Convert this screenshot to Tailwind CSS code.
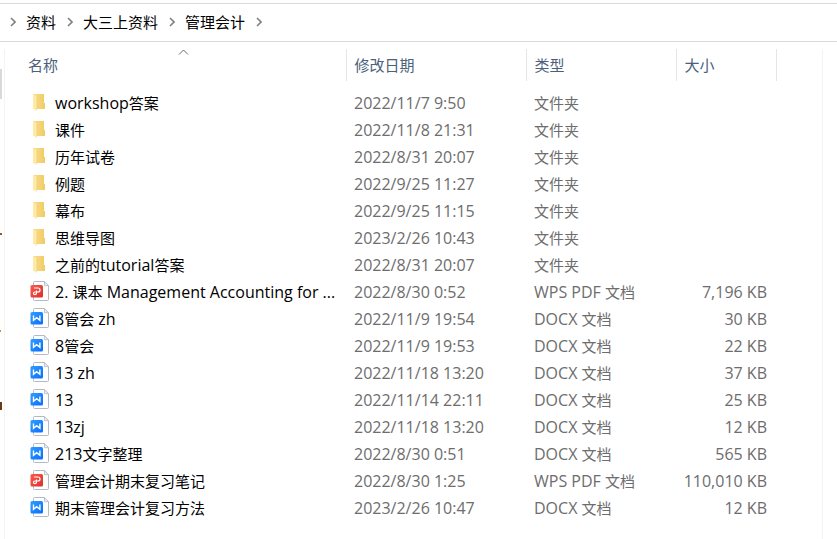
<!DOCTYPE html>
<html lang="zh-CN">
<head>
  <meta charset="UTF-8">
  <meta name="viewport" content="width=device-width, initial-scale=1.0">
  <title>管理会计</title>
  <script src="https://cdn.jsdelivr.net/npm/@tailwindcss/browser@4"></script>
</head>
<body class="bg-white text-[15px] leading-5 font-['Open_Sans','Noto_Sans_CJK_SC',sans-serif] text-black">
  <!-- icon definitions -->
  <svg class="absolute w-0 h-0" aria-hidden="true" xmlns="http://www.w3.org/2000/svg">
    <defs>
      <linearGradient id="folderBack" x1="0" x2="1" y1="0" y2="0">
        <stop offset="0" stop-color="#f8df90" />
        <stop offset="1" stop-color="#f0cb62" />
      </linearGradient>
      <linearGradient id="blue" x1="0" x2="1" y1="0" y2="1">
        <stop offset="0" stop-color="#2ea0ff" />
        <stop offset="1" stop-color="#0a6cff" />
      </linearGradient>
      <linearGradient id="red" x1="0" x2="1" y1="0" y2="1">
        <stop offset="0" stop-color="#ff5a4a" />
        <stop offset="1" stop-color="#d92f2f" />
      </linearGradient>
    </defs>
    <symbol id="icon-folder" viewBox="0 0 20 20">
      <path d="M3 2h11v9h1v6H3z" fill="url(#folderBack)" />
      <path d="M3 2l4 2.300v13.500q0 1.200-1 .7L3 16.500z" fill="#ffe9a6" />
      <path d="M7 4.300v12.700" stroke="#ecca70" stroke-width=".6" />
    </symbol>
    <symbol id="icon-page" viewBox="0 0 20 20">
      <path d="M4.500 .5h9.700l4.300 4.300v13.700q0 1-1 1h-13q-1 0-1-1v-17q0-1 1-1z" fill="#fff" stroke="#b4b9c6" />
      <path d="M14.500 .7v4h4z" fill="#eef0f4" stroke="#b4b9c6" stroke-width=".8" />
    </symbol>
    <symbol id="icon-docx" viewBox="0 0 20 20">
      <use href="#icon-page" width="20" height="20" />
      <rect x=".5" y="4" width="12.500" height="12.500" rx="1.500" fill="url(#blue)" />
      <path d="M3.500 7.500v4.800l3.200-2.600 3.200 2.600V7.500" fill="none" stroke="#fff" stroke-width="1.400" />
    </symbol>
    <symbol id="icon-pdf" viewBox="0 0 20 20">
      <use href="#icon-page" width="20" height="20" />
      <rect x=".5" y="4" width="12.500" height="12.500" rx="1.500" fill="url(#red)" />
      <path d="M4 7h4a2 2 0 0 1 0 4H4.800a1.300 1.300 0 0 0 0 2.600q1.700 0 1.700-1.600V9.500" fill="none" stroke="#fff" stroke-width="1.200" />
    </symbol>
    <symbol id="icon-chevron" viewBox="0 0 6 10">
      <path d="M1 1l4 4-4 4" fill="none" stroke="#808080" stroke-width="1.600" />
    </symbol>
  </svg>

  <div class="min-h-screen flex flex-col pt-[3px] overflow-hidden">
    <nav aria-label="路径" class="h-[39px] flex items-center gap-[11px] pl-[10px] pb-[2px] border-y border-[#d9d9d9]">
      <svg class="w-[6px] h-[10px] -mr-px"><use href="#icon-chevron" /></svg>
      <a href="#">资料</a>
      <svg class="w-[6px] h-[10px] -mr-px"><use href="#icon-chevron" /></svg>
      <a href="#">大三上资料</a>
      <svg class="w-[6px] h-[10px] -mr-px"><use href="#icon-chevron" /></svg>
      <a href="#">管理会计</a>
      <svg class="w-[6px] h-[10px] -mr-px"><use href="#icon-chevron" /></svg>
    </nav>

    <div class="flex-1 flex pt-[7px]">
      <!-- edge of the navigation pane -->
      <aside class="w-1 relative">
        <div class="absolute left-0 top-5 w-[2px] h-[30px] bg-[#d9d9d9]"></div>
        <div class="absolute left-0 top-[184px] w-[2px] h-[2px] bg-[#8a5a2a]"></div>
        <div class="absolute left-0 top-[281px] w-px h-[2px] bg-[#c89040]"></div>
        <div class="absolute left-0 top-[353px] w-[2px] h-2 bg-[#6b3a10]"></div>
      </aside>

      <main class="flex-1 mr-[14px] border-x border-[#f3f3f3]">
        <table class="w-full table-fixed text-left text-[#6d6d6d]">
          <colgroup>
            <col class="w-[341px]">
            <col class="w-[180px]">
            <col class="w-[150px]">
            <col class="w-[100px]">
            <col>
          </colgroup>
          <thead class="text-[#4c607a]">
            <tr class="h-8">
              <th class="p-0 font-normal border-r border-[#e5e5e5] relative">
                <button class="w-full pl-[23px] text-left">名称</button>
                <svg class="absolute top-0 left-[173px] w-[11px] h-[6px]" viewBox="0 0 11 6"><path d="M1 5.500L5.500 1 10 5.500" fill="none" stroke="#6d6d6d" /></svg>
              </th>
              <th class="p-0 font-normal border-r border-[#e5e5e5]"><button class="w-full pl-2 text-left">修改日期</button></th>
              <th class="p-0 font-normal border-r border-[#e5e5e5]"><button class="w-full pl-2 text-left">类型</button></th>
              <th class="p-0 font-normal border-r border-[#e5e5e5]"><button class="w-full pl-2 text-left">大小</button></th>
              <td></td>
            </tr>
          </thead>
          <tbody id="files" class="before:block before:h-[9px]"></tbody>
        </table>
      </main>
    </div>
  </div>

  <script>
    const types = { folder: '文件夹', pdf: 'WPS PDF 文档', docx: 'DOCX 文档' };

    const files = [
      ['folder', 'workshop答案', '2022/11/7 9:50', ''],
      ['folder', '课件', '2022/11/8 21:31', ''],
      ['folder', '历年试卷', '2022/8/31 20:07', ''],
      ['folder', '例题', '2022/9/25 11:27', ''],
      ['folder', '幕布', '2022/9/25 11:15', ''],
      ['folder', '思维导图', '2023/2/26 10:43', ''],
      ['folder', '之前的tutorial答案', '2022/8/31 20:07', ''],
      ['pdf', '2. 课本 Management Accounting for ...', '2022/8/30 0:52', '7,196 KB'],
      ['docx', '8管会 zh', '2022/11/9 19:54', '30 KB'],
      ['docx', '8管会', '2022/11/9 19:53', '22 KB'],
      ['docx', '13 zh', '2022/11/18 13:20', '37 KB'],
      ['docx', '13', '2022/11/14 22:11', '25 KB'],
      ['docx', '13zj', '2022/11/18 13:20', '12 KB'],
      ['docx', '213文字整理', '2022/8/30 0:51', '565 KB'],
      ['pdf', '管理会计期末复习笔记', '2022/8/30 1:25', '110,010 KB'],
      ['docx', '期末管理会计复习方法', '2023/2/26 10:47', '12 KB'],
    ];

    // latin runs are set one size up from the Chinese text
    const mixed = text => text.replace(/[\x20-\x7e]+/g, '<span class="text-base leading-5">$&</span>');

    document.getElementById('files').innerHTML = files.map(([kind, name, date, size]) => `
      <tr class="h-[27px]">
        <td class="p-0">
          <div class="flex items-start gap-[5px] pl-[25px] h-[27px] pt-[2px]">
            <svg class="w-5 h-5 shrink-0"><use href="#icon-${kind}" /></svg>
            <span class="pt-px text-black whitespace-nowrap">${mixed(name)}</span>
          </div>
        </td>
        <td class="p-0 pl-2 pb-px">${mixed(date)}</td>
        <td class="p-0 pl-2 pb-px">${mixed(types[kind])}</td>
        <td class="p-0 pr-[9px] pb-px text-right whitespace-nowrap">${mixed(size)}</td>
        <td></td>
      </tr>`).join('');
  </script>
</body>
</html>
